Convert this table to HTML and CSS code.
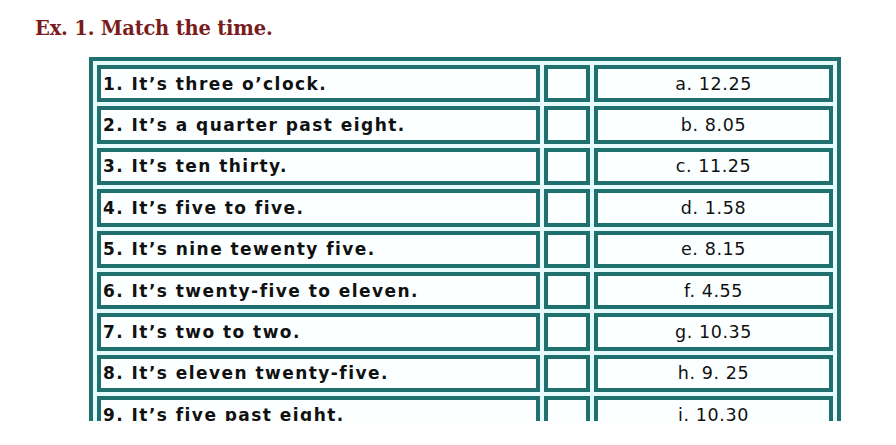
FILE: index.html
```html
<!DOCTYPE html>
<html lang="en">
<head>
<meta charset="utf-8">
<title>Ex. 1. Match the time.</title>
<link rel="stylesheet" href="styles.css">
</head>
<body>
<div class="page">
  <h1 class="title">Ex. 1. Match the time.</h1>
  <table class="match">
    <tr><td class="q">1. It’s three o’clock.</td><td class="blank"></td><td class="a">a. 12.25</td></tr>
    <tr><td class="q">2. It’s a quarter past eight.</td><td class="blank"></td><td class="a">b. 8.05</td></tr>
    <tr><td class="q">3. It’s ten thirty.</td><td class="blank"></td><td class="a">c. 11.25</td></tr>
    <tr><td class="q">4. It’s five to five.</td><td class="blank"></td><td class="a">d. 1.58</td></tr>
    <tr><td class="q">5. It’s nine tewenty five.</td><td class="blank"></td><td class="a">e. 8.15</td></tr>
    <tr><td class="q">6. It’s twenty-five to eleven.</td><td class="blank"></td><td class="a">f. 4.55</td></tr>
    <tr><td class="q">7. It’s two to two.</td><td class="blank"></td><td class="a">g. 10.35</td></tr>
    <tr><td class="q">8. It’s eleven twenty-five.</td><td class="blank"></td><td class="a">h. 9. 25</td></tr>
    <tr><td class="q">9. It’s five past eight.</td><td class="blank"></td><td class="a">i. 10.30</td></tr>
  </table>
</div>
</body>
</html>
```
FILE: styles.css
```css
html, body {
  margin: 0;
  padding: 0;
  background: #ffffff;
}
.page {
  height: 421px;
  overflow: hidden;
  padding: 0 0 0 35px;
  box-sizing: border-box;
}
.title {
  margin: 0;
  padding-top: 17px;
  font-family: "DejaVu Serif", "Liberation Serif", serif;
  font-weight: bold;
  font-size: 19.5px;
  line-height: 24px;
  letter-spacing: -0.2px;
  color: #7a1c1c;
}
.match {
  margin: 16px 0 0 54px;
  width: 752px;
  border: 4px solid #217070;
  border-collapse: separate;
  border-spacing: 4px;
  background: #e6fcfc;
  table-layout: fixed;
}
.match td {
  border: 4px solid #217070;
  background: #fbffff;
  height: 29.4px;
  padding: 0 4px;
  box-sizing: content-box;
}
.match td.q {
  width: 429px;
  font-family: "DejaVu Sans", sans-serif;
  font-weight: bold;
  font-size: 17px;
  letter-spacing: 1.45px;
  color: #111;
  text-align: left;
  padding-left: 2px;
}
.match td.blank {
  width: 30px;
}
.match td.a {
  font-family: "DejaVu Sans", sans-serif;
  font-size: 17.5px;
  letter-spacing: 0.6px;
  color: #111;
  text-align: center;
}
```
